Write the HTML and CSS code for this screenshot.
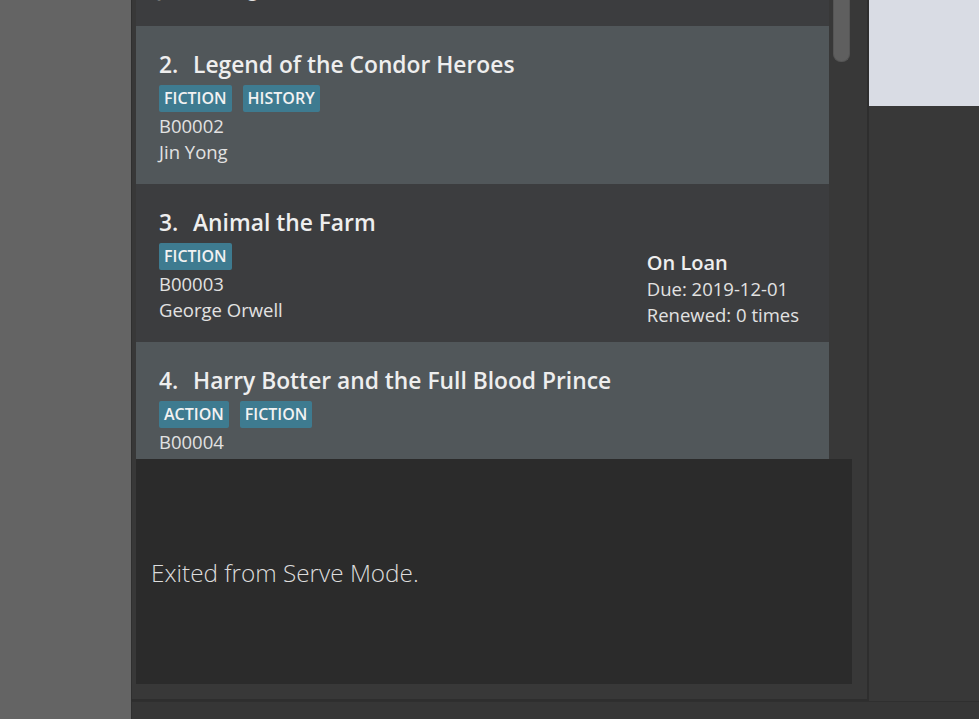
FILE: index.html
```html
<!DOCTYPE html>
<html>
<head>
<meta charset="utf-8">
<link rel="stylesheet" href="styles.css">
</head>
<body>
<div class="left-strip"></div>
<div class="right-col">
  <div class="top-row">
    <div class="main">
      <div class="list-panel">
        <div class="cards">
          <div class="card odd first">
            <div class="card-left">
              <div class="title"><span class="idx">1.</span>Harry Botter and the Sorcerer Stone</div>
              <div class="tags"><span class="tag">FANTASY</span></div>
              <div class="detail">B00001</div>
              <div class="detail">J.K. Rowling</div>
            </div>
          </div>
          <div class="card even">
            <div class="card-left">
              <div class="title"><span class="idx">2.</span>Legend of the Condor Heroes</div>
              <div class="tags"><span class="tag">FICTION</span><span class="tag">HISTORY</span></div>
              <div class="detail">B00002</div>
              <div class="detail">Jin Yong</div>
            </div>
          </div>
          <div class="card odd">
            <div class="card-left">
              <div class="title"><span class="idx">3.</span>Animal the Farm</div>
              <div class="tags"><span class="tag">FICTION</span></div>
              <div class="detail">B00003</div>
              <div class="detail">George Orwell</div>
            </div>
            <div class="card-right">
              <div class="loan">On Loan</div>
              <div class="detail">Due: 2019-12-01</div>
              <div class="detail">Renewed: 0 times</div>
            </div>
          </div>
          <div class="card even">
            <div class="card-left">
              <div class="title"><span class="idx">4.</span>Harry Botter and the Full Blood Prince</div>
              <div class="tags"><span class="tag">ACTION</span><span class="tag">FICTION</span></div>
              <div class="detail">B00004</div>
              <div class="detail">J.K. Rowling</div>
            </div>
          </div>
        </div>
        <div class="scroll-track"><div class="thumb"></div></div>
      </div>
      <div class="result">Exited from Serve Mode.</div>
    </div>
    <div class="side">
      <div class="side-light"></div>
    </div>
  </div>
  <div class="status"></div>
</div>
</body>
</html>
```

FILE: styles.css
```css
html, body {
  margin: 0;
  padding: 0;
  height: 719px;
  overflow: hidden;
}
body {
  display: flex;
  background: #383838;
  font-family: "Open Sans", "Liberation Sans", sans-serif;
  color: #ececec;
}
.left-strip {
  width: 131px;
  flex: none;
  background: #646464;
}
.right-col {
  flex: 1;
  display: flex;
  flex-direction: column;
  min-width: 0;
}
.top-row {
  display: flex;
  height: 701px;
  flex: none;
}
.main {
  width: 738px;
  flex: none;
  box-sizing: border-box;
  border-left: 1px solid #2f2f2f;
  border-right: 2px solid #2e2e2e;
  border-bottom: 2px solid #2e2e2e;
  padding: 0 15px 15px 4px;
  display: flex;
  flex-direction: column;
  background: #383838;
}
.list-panel {
  height: 459px;
  flex: none;
  display: flex;
  overflow: hidden;
}
.cards {
  width: 693px;
  flex: none;
  display: flex;
  flex-direction: column;
}
.card {
  height: 158px;
  flex: none;
  box-sizing: border-box;
  padding: 23px 30px 0 23px;
  display: flex;
  justify-content: space-between;
  overflow: hidden;
}
.card.first {
  margin-top: -132px;
  padding-top: 19px;
}
.odd { background: #3c3d3f; }
.even { background: #51575a; }
.title {
  font-size: 22.8px;
  font-weight: 600;
  line-height: 32px;
  color: #eeeeee;
  white-space: nowrap;
}
.idx {
  display: inline-block;
  width: 34px;
}
.tags {
  display: flex;
  gap: 11px;
  margin-top: 4px;
}
.tag {
  background: #3e7b90;
  color: #f2f2f2;
  font-size: 16px;
  font-weight: 600;
  height: 27px;
  line-height: 27px;
  padding: 0 5px;
  border-radius: 2px;
}
.tags + .detail {
  margin-top: 1px;
}
.detail {
  font-size: 18.5px;
  line-height: 26px;
  color: #e2e2e2;
  white-space: nowrap;
}
.card-right {
  align-self: flex-end;
  padding-bottom: 14px;
}
.loan {
  font-size: 20px;
  font-weight: 600;
  line-height: 26px;
  color: #eeeeee;
}
.scroll-track {
  width: 23px;
  flex: none;
  background: #383838;
  padding-left: 4px;
  box-sizing: border-box;
}
.thumb {
  width: 17px;
  height: 62px;
  box-sizing: border-box;
  background: #5f5f5f;
  border: 1px solid #555555;
  border-top: none;
  border-radius: 0 0 8px 8px;
}
.result {
  height: 225px;
  flex: none;
  background: #2b2b2b;
  color: #dcdcdc;
  font-size: 24.3px;
  font-weight: 300;
  display: flex;
  align-items: center;
  padding-left: 15px;
  padding-top: 2px;
  box-sizing: border-box;
}
.side {
  flex: 1;
  background: #383838;
}
.side-light {
  height: 106px;
  background: #d9dce4;
}
.status {
  flex: 1;
  background: #363636;
  border-top: 1px solid #2f2f2f;
  border-left: 1px solid #2f2f2f;
}
```
